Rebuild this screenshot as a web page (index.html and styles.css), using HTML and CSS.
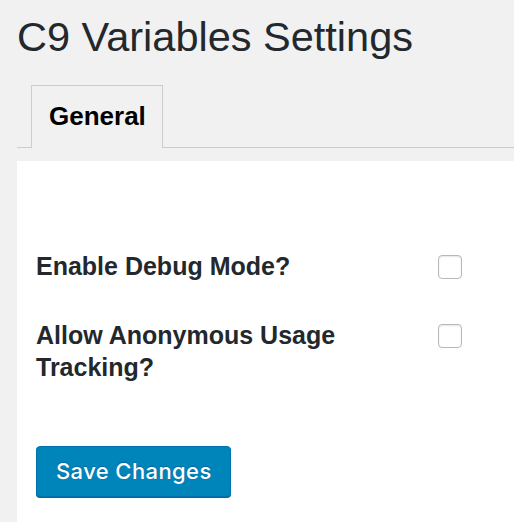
FILE: index.html
```html
<!DOCTYPE html>
<html lang="en">
<head>
<meta charset="utf-8">
<title>C9 Variables Settings</title>
<link rel="stylesheet" href="styles.css">
</head>
<body>
<div class="wrap">
  <h1 class="title">C9 Variables Settings</h1>
  <nav class="tabs">
    <a class="tab tab-active" href="#">General</a>
  </nav>
  <form class="panel">
    <div class="form-table">
      <label class="field-label" for="debug">Enable Debug Mode?</label>
      <input class="check" type="checkbox" id="debug">
      <label class="field-label" for="tracking">Allow Anonymous Usage Tracking?</label>
      <input class="check" type="checkbox" id="tracking">
    </div>
    <button class="btn-primary" type="button">Save Changes</button>
  </form>
</div>
</body>
</html>
```

FILE: styles.css
```css
html, body {
  margin: 0;
  padding: 0;
  background: #f1f1f1;
}

body {
  font-family: "Liberation Sans", Arial, sans-serif;
  color: #23282d;
}

.wrap {
  padding-left: 17px;
}

.title {
  margin: 13px 0 0 0;
  font-size: 41.5px;
  line-height: 48px;
  font-weight: 400;
  color: #23282d;
}

.tabs {
  display: flex;
  margin-top: 24px;
  padding-left: 14px;
  border-bottom: 1px solid #ccc;
}

.tab {
  display: block;
  padding: 15px 16px 17px 17px;
  border: 1px solid #ccc;
  border-bottom: none;
  margin-bottom: -1px;
  background: #f1f1f1;
  font-size: 26px;
  line-height: 30px;
  font-weight: 700;
  color: #000;
  text-decoration: none;
}

.panel {
  margin: 13px 0 0 0;
  background: #fff;
  padding: 89px 0 30px 19px;
}

.form-table {
  display: grid;
  grid-template-columns: 382px auto;
  column-gap: 20px;
  row-gap: 37px;
  align-items: start;
}

.field-label {
  font-size: 25px;
  line-height: 32px;
  font-weight: 700;
  color: #23282d;
}

.check {
  appearance: none;
  -webkit-appearance: none;
  margin: 5px 0 0 0;
  width: 24px;
  height: 24px;
  box-sizing: border-box;
  border: 1px solid #b4b9be;
  border-radius: 4px;
  background: #fff;
  box-shadow: inset 0 1px 2px rgba(0, 0, 0, 0.1);
}

.btn-primary {
  display: block;
  margin-top: 63px;
  padding: 0 18px 0 19px;
  height: 51px;
  line-height: 49px;
  border: 1px solid #0073aa;
  border-radius: 4px;
  background: #0085ba;
  box-shadow: 0 1px 0 #006799;
  color: #fff;
  font-family: Inter, "Liberation Sans", sans-serif;
  font-size: 22px;
  letter-spacing: 0.4px;
  font-weight: 500;
  text-shadow: 0 -1px 1px #006799;
}
```
